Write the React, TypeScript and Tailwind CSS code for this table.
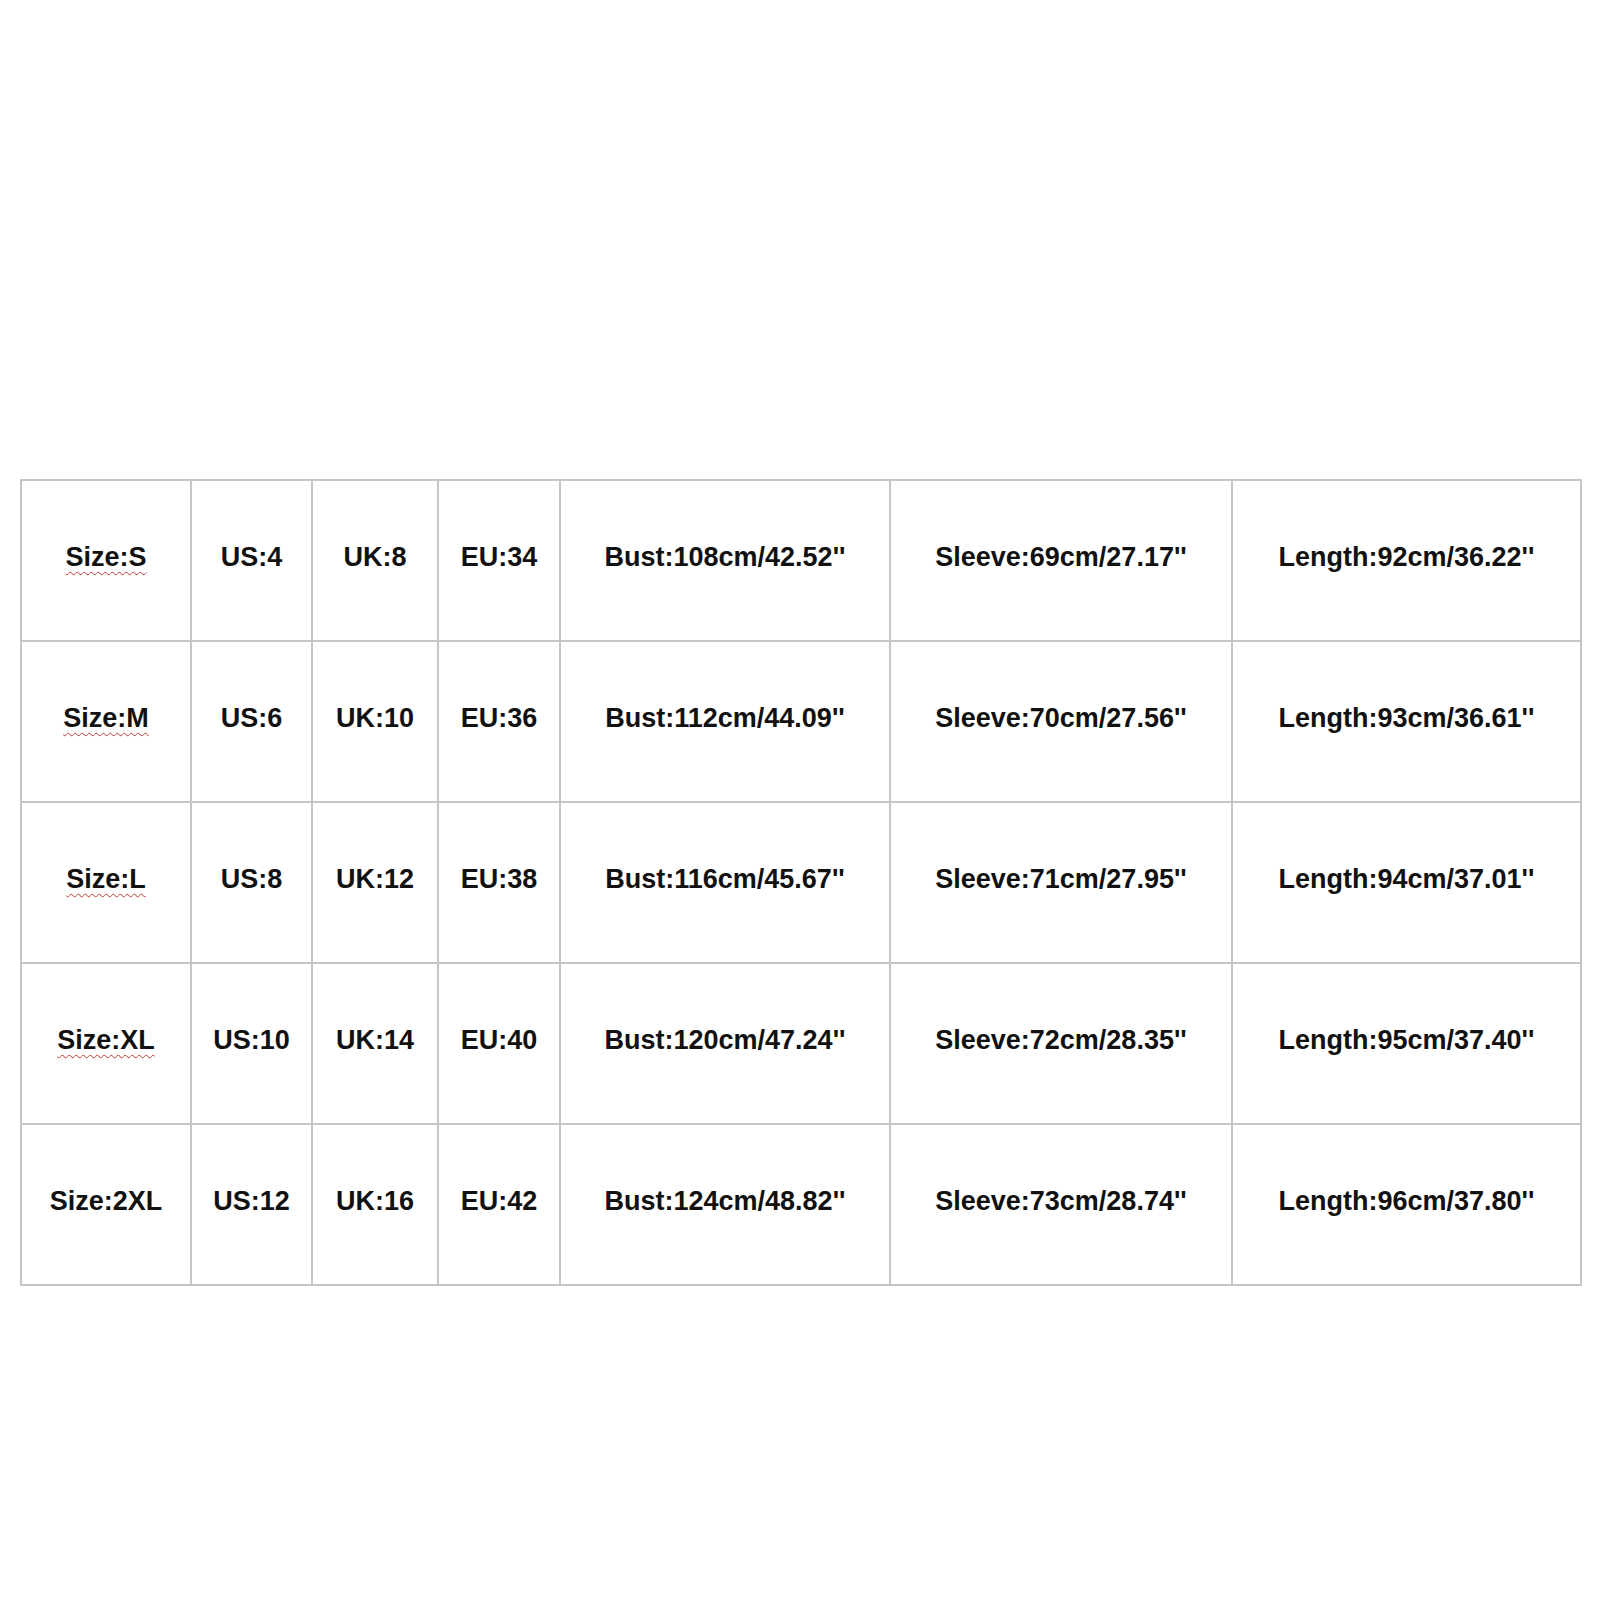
const rows = [
  ["Size:S", "US:4", "UK:8", "EU:34", "Bust:108cm/42.52''", "Sleeve:69cm/27.17''", "Length:92cm/36.22''"],
  ["Size:M", "US:6", "UK:10", "EU:36", "Bust:112cm/44.09''", "Sleeve:70cm/27.56''", "Length:93cm/36.61''"],
  ["Size:L", "US:8", "UK:12", "EU:38", "Bust:116cm/45.67''", "Sleeve:71cm/27.95''", "Length:94cm/37.01''"],
  ["Size:XL", "US:10", "UK:14", "EU:40", "Bust:120cm/47.24''", "Sleeve:72cm/28.35''", "Length:95cm/37.40''"],
  ["Size:2XL", "US:12", "UK:16", "EU:42", "Bust:124cm/48.82''", "Sleeve:73cm/28.74''", "Length:96cm/37.80''"],
];

const widths = ["w-[170px]", "w-[121px]", "w-[126px]", "w-[122px]", "w-[330px]", "w-[342px]", "w-[349px]"];

export default function App() {
  return (
    <div
      className="w-[1600px] h-[1600px] bg-white pt-[479px] pl-[20px]"
      style={{ fontFamily: '"Liberation Sans", Arial, sans-serif' }}
    >
      <table className="border-collapse table-fixed w-[1560px]">
        <colgroup>
          {widths.map((w, i) => (
            <col key={i} className={w} />
          ))}
        </colgroup>
        <tbody>
          {rows.map((row, r) => (
            <tr key={r} className="h-[161px]">
              {row.map((cell, c) => (
                <td
                  key={c}
                  className="border-2 border-[#c6c6c6] text-center align-middle text-[27px] font-bold text-[#111] whitespace-nowrap p-0 pb-[6px]"
                >
                  <span
                    className={
                      c === 0 && r < 4
                        ? "underline decoration-wavy decoration-[#c0392b] decoration-1 underline-offset-[5px]"
                        : ""
                    }
                  >
                    {cell}
                  </span>
                </td>
              ))}
            </tr>
          ))}
        </tbody>
      </table>
    </div>
  );
}
